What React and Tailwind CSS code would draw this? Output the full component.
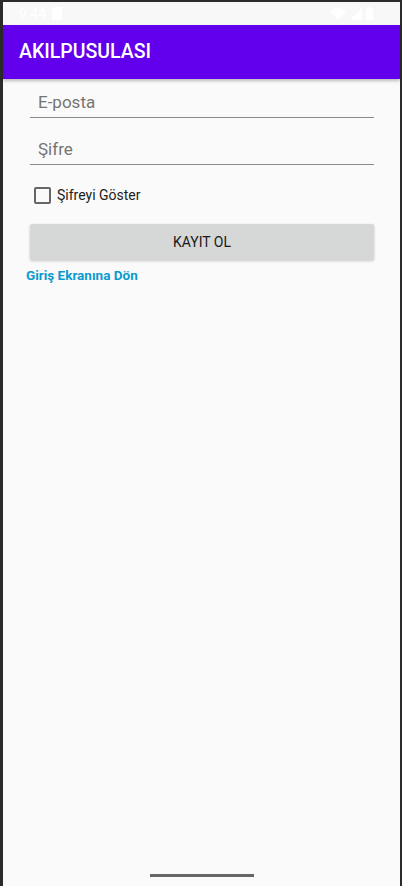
export default function App() {
  return (
    <div className="w-[402px] h-[886px] bg-[#2b2b2b] pt-[2px] pl-[3px] pr-[2px] overflow-hidden" style={{ fontFamily: "Roboto, 'Liberation Sans', sans-serif" }}>
      <div className="relative h-full bg-[#fafafa] flex flex-col">
        {/* status bar */}
        <div className="h-[23px] bg-[#f8f8f8] flex items-center justify-between pl-[16px] pr-[27px] text-white">
          <div className="flex items-center gap-[6px]">
            <span className="text-[14px] leading-none">9:44</span>
            <svg width="10" height="13" viewBox="0 0 10 13" fill="white">
              <path d="M2 0h8v13H0V2z" />
            </svg>
          </div>
          <div className="flex items-center gap-[4px]">
            <svg width="16" height="12" viewBox="0 0 16 12" fill="white">
              <path d="M0 3.5C4.5-1 11.5-1 16 3.5L8 12z" />
            </svg>
            <svg width="12" height="12" viewBox="0 0 12 12" fill="white">
              <path d="M12 0v12H0z" />
            </svg>
            <svg width="7" height="13" viewBox="0 0 7 13" fill="white">
              <path d="M2 0h3v1.5h2V13H0V1.5h2z" />
            </svg>
          </div>
        </div>

        {/* app bar */}
        <div className="h-[54px] bg-[#6200ee] flex items-center pl-[16px] shadow-[0_2px_3px_rgba(0,0,0,0.25)] z-10">
          <h1 className="text-white text-[19.5px] font-medium">AKILPUSULASI</h1>
        </div>

        {/* form */}
        <div className="pl-[27px] pr-[26px] flex flex-col">
          <div className="mt-[12px] h-[27px] border-b border-[#8a8a8a] flex items-end pb-[6px] pl-[8px]">
            <span className="text-[#757575] text-[17px] leading-none">E-posta</span>
          </div>
          <div className="mt-[20px] h-[27px] border-b border-[#8a8a8a] flex items-end pb-[6px] pl-[8px]">
            <span className="text-[#757575] text-[17px] leading-none">Şifre</span>
          </div>

          <div className="flex items-center gap-[6px] mt-[20px] ml-[4px]">
            <div className="w-[17px] h-[17px] border-2 border-[#666] rounded-[2px]" />
            <span className="text-[14px] text-[#222]">Şifreyi Göster</span>
          </div>

          <button className="mt-[18px] h-[36px] bg-[#d6d7d7] rounded-[2px] shadow-[0_1px_3px_rgba(0,0,0,0.2)] text-[14px] font-normal text-[#1a1a1a]">
            KAYIT OL
          </button>

          <a className="-ml-[4px] mt-[9px] text-[13.5px] font-bold text-[#0a9ad0] leading-none">
            Giriş Ekranına Dön
          </a>
        </div>

        {/* home indicator */}
        <div className="absolute bottom-[9px] left-[147px] w-[104px] h-[3px] bg-[#666]" />
      </div>
    </div>
  );
}
